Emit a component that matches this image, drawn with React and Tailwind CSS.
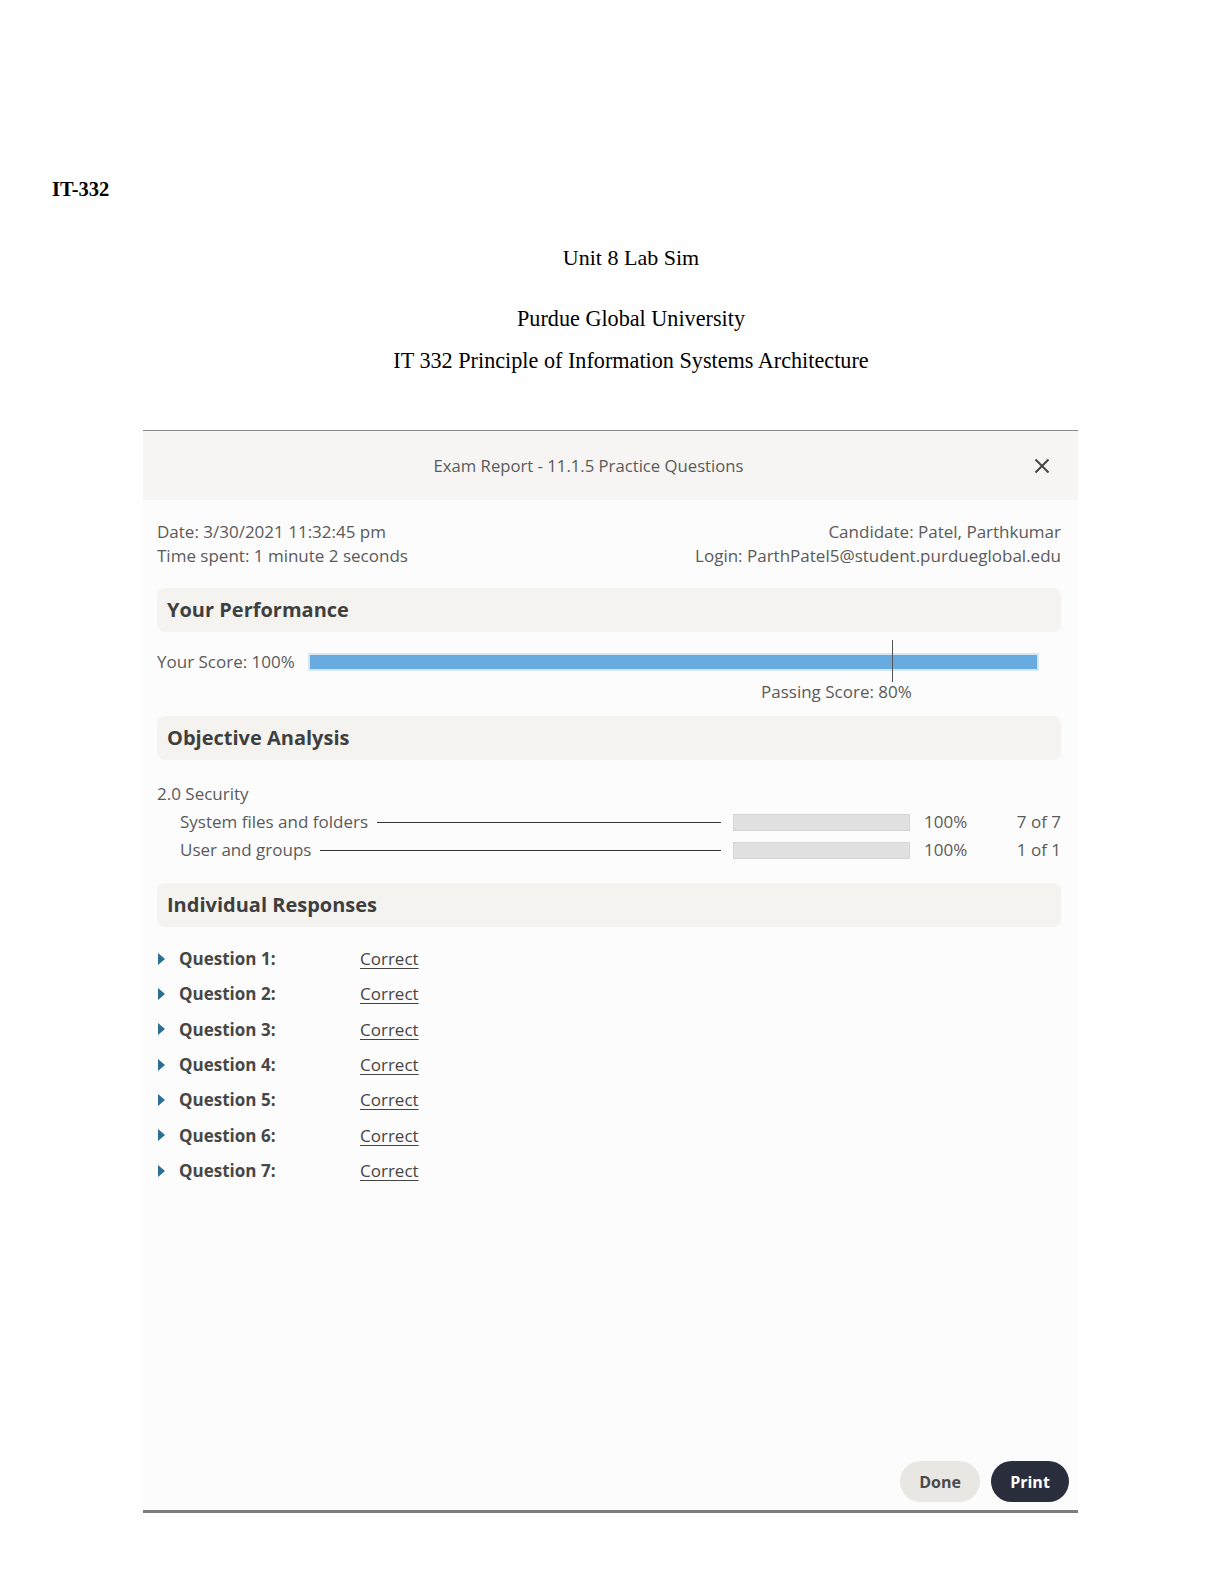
export default function App() {
  const questions = [1, 2, 3, 4, 5, 6, 7];
  const objectives = [
    { name: "System files and folders", pct: "100%", count: "7 of 7" },
    { name: "User and groups", pct: "100%", count: "1 of 1" },
  ];
  return (
    <div className="w-[1224px] min-h-[1584px] bg-white">
      <div className="pt-[177px] pl-[52px] pr-[14px] font-['Liberation_Serif',serif] text-black">
        <div className="text-[20.5px] leading-[24px] font-bold">IT-332</div>
        <div className="mt-[44px] text-center text-[22px] leading-[26px]">Unit 8 Lab Sim</div>
        <div className="mt-[35px] text-center text-[22.2px] leading-[26px]">Purdue Global University</div>
        <div className="mt-[16px] text-center text-[22.2px] leading-[26px]">
          IT 332 Principle of Information Systems Architecture
        </div>
      </div>

      <div className="ml-[143px] mt-[56px] w-[935px] border-t border-t-[#8a8a8a] border-b-[3px] border-b-[#7d7d7d] font-['Open_Sans',sans-serif]">
        {/* Header */}
        <div className="h-[69px] bg-[#f6f5f3] flex items-center">
          <div className="flex-1 text-center text-[16.7px] text-[#5a5a5a]">
            Exam Report - 11.1.5 Practice Questions
          </div>
          <div className="pr-[28px] flex items-center">
            <svg width="16" height="16" viewBox="0 0 16 16" fill="none">
              <path d="M1.5 1.5L14.5 14.5M14.5 1.5L1.5 14.5" stroke="#444" strokeWidth="2" />
            </svg>
          </div>
        </div>

        {/* Body */}
        <div className="h-[1010px] bg-[#fcfcfc] flex flex-col pl-[14px] pr-[17px] pt-[20px] pb-[8px] text-[17px] text-[#5a5a5a]">
          <div className="flex justify-between leading-[24px]">
            <div>
              <div>Date: 3/30/2021 11:32:45 pm</div>
              <div>Time spent: 1 minute 2 seconds</div>
            </div>
            <div className="text-right">
              <div>Candidate: Patel, Parthkumar</div>
              <div>Login: ParthPatel5@student.purdueglobal.edu</div>
            </div>
          </div>

          <div className="mt-[20px] h-[44px] rounded-[8px] bg-[#f4f3f0] flex items-center pl-[10px] text-[20px] font-bold text-[#3f3f3f]">
            Your Performance
          </div>

          <div className="mt-[21px] flex items-center h-[18px]">
            <span className="leading-[24px] whitespace-nowrap">Your Score: 100%</span>
            <div className="relative ml-[13px] mr-[22px] flex-1 h-[18px] border-2 border-[#d6e6f2] bg-[#68abe0]">
              <div className="absolute left-[80%] top-[-15px] h-[42px] w-px bg-[#555]" />
            </div>
          </div>
          <div className="mt-[9px] leading-[24px] pl-[604px]">Passing Score: 80%</div>

          <div className="mt-[12px] h-[44px] rounded-[8px] bg-[#f4f3f0] flex items-center pl-[10px] text-[20px] font-bold text-[#3f3f3f]">
            Objective Analysis
          </div>

          <div className="mt-[20px] leading-[28px]">2.0 Security</div>
          {objectives.map((o) => (
            <div key={o.name} className="flex items-center h-[28px] pl-[23px]">
              <span className="whitespace-nowrap">{o.name}</span>
              <div className="flex-1 h-px bg-[#333] ml-[9px] mr-[12px]" />
              <div className="w-[177px] h-[17px] bg-[#e1e1e1] border border-[#d4d4d4]" />
              <div className="w-[91px] pl-[14px]">{o.pct}</div>
              <div className="w-[60px] text-right">{o.count}</div>
            </div>
          ))}

          <div className="mt-[19px] h-[44px] rounded-[8px] bg-[#f4f3f0] flex items-center pl-[10px] text-[20px] font-bold text-[#3f3f3f]">
            Individual Responses
          </div>

          <div className="mt-[14px]">
            {questions.map((q) => (
              <div key={q} className="h-[35.33px] flex items-center">
                <div className="w-[22px] pl-[1px] flex items-center">
                  <svg width="7" height="12" viewBox="0 0 7 12">
                    <path d="M0 0L7 6L0 12Z" fill="#2e6e90" />
                  </svg>
                </div>
                <div className="w-[181px] font-bold text-[#474747]">Question {q}:</div>
                <div className="text-[#444] underline underline-offset-[3px]">Correct</div>
              </div>
            ))}
          </div>

          <div className="mt-auto -mr-[8px] flex justify-end gap-[11px]">
            <div className="w-[80px] h-[41px] rounded-full bg-[#e8e7e3] flex items-center justify-center text-[16px] font-bold text-[#4a4a4a]">
              Done
            </div>
            <div className="w-[78px] h-[41px] rounded-full bg-[#2a2d3c] flex items-center justify-center text-[16px] font-bold text-white">
              Print
            </div>
          </div>
        </div>
      </div>
    </div>
  );
}
